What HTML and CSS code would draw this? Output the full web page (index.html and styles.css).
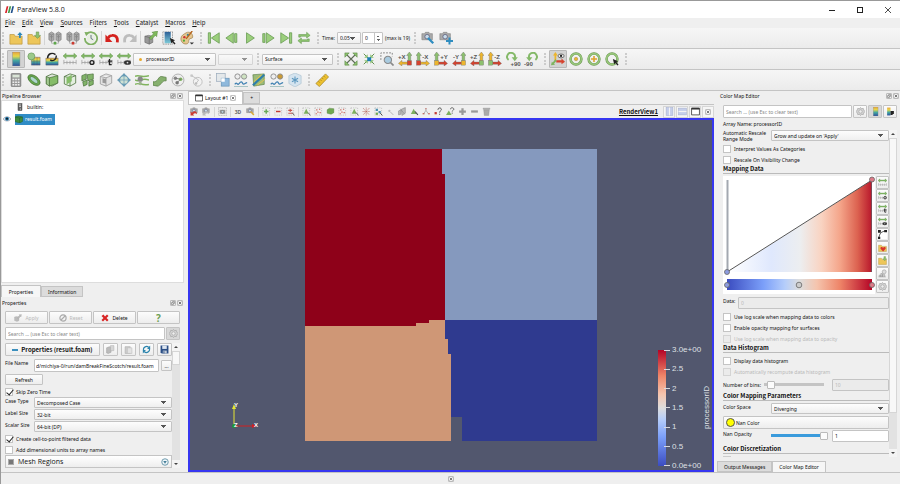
FILE: index.html
```html
<!DOCTYPE html>
<html lang="en">
<head>
    <meta charset="UTF-8">
    <meta name="viewport" content="width=device-width, initial-scale=1.0">
    <title>ParaView 5.8.0</title>
    <link rel="stylesheet" href="styles.css">
</head>
<body>
<!-- icon set -->
<svg class="sprite" aria-hidden="true">
    <defs>
        <linearGradient id="rainbow" x1="0" y1="0" x2="0" y2="1">
            <stop offset="0" stop-color="#e8a33c"/><stop offset=".3" stop-color="#e6d84a"/>
            <stop offset=".6" stop-color="#45a9a0"/><stop offset="1" stop-color="#2c4f9e"/>
        </linearGradient>
        <linearGradient id="coolwarm">
            <stop offset="0" stop-color="#3b4cc0"/><stop offset=".25" stop-color="#7b9ff9"/>
            <stop offset=".4" stop-color="#b5cdfa"/><stop offset=".5" stop-color="#dddddd"/>
            <stop offset=".62" stop-color="#f5c4ad"/><stop offset=".78" stop-color="#ee8468"/>
            <stop offset="1" stop-color="#b40426"/>
        </linearGradient>
        <linearGradient id="legend" x1="0" y1="1" x2="0" y2="0">
            <stop offset="0" stop-color="#3b4cc0"/><stop offset=".25" stop-color="#7b9ff9"/>
            <stop offset=".4" stop-color="#b5cdfa"/><stop offset=".5" stop-color="#dddddd"/>
            <stop offset=".62" stop-color="#f5c4ad"/><stop offset=".78" stop-color="#ee8468"/>
            <stop offset="1" stop-color="#b40426"/>
        </linearGradient>
        <linearGradient id="opacity">
            <stop offset="0" stop-color="#ffffff"/><stop offset=".3" stop-color="#dfe8fd"/>
            <stop offset=".5" stop-color="#eceef0"/><stop offset=".65" stop-color="#f9d3c1"/>
            <stop offset=".78" stop-color="#f4a489"/><stop offset=".9" stop-color="#dc6250"/>
            <stop offset="1" stop-color="#b8162b"/>
        </linearGradient>
    </defs>
    <symbol id="logo" viewBox="0 0 16 12">
        <path d="M3 0h3L3 12H0z" fill="#d8232a"/><path d="M8 0h3L8 12H5z" fill="#3f9a48"/><path d="M13 0h3l-3 12h-3z" fill="#20508c"/>
    </symbol>
    <symbol id="folder" viewBox="0 0 16 16">
        <path d="M1 4h5l1 2h8v9H1z" fill="#edc65a" stroke="#b58f35" stroke-width=".7"/>
    </symbol>
    <symbol id="open" viewBox="0 0 16 16">
        <use href="#folder"/><path d="M12.500 1l3 3.500h-2V8h-2V4.500h-2z" fill="#2a86b8"/>
    </symbol>
    <symbol id="load" viewBox="0 0 16 16">
        <use href="#folder"/><path d="M12 8.500l3.500-3.500h-2V1h-3v4h-2z" fill="#8fc06c" stroke="#5a8a42" stroke-width=".5"/>
    </symbol>
    <symbol id="server" viewBox="0 0 16 16">
        <path d="M1 3l3-2 3 2v7l-3 2-3-2zM9 3l3-2 3 2v7l-3 2-3-2z" fill="#a9a9a9" stroke="#777" stroke-width=".7"/>
        <path d="M1 3l3 1.500L7 3M4 4.500V12M9 3l3 1.500L15 3M12 4.500V12M2 6l2 1 2-1M10 6l2 1 2-1" fill="none" stroke="#777" stroke-width=".6"/>
        <path d="M4 12v2h8v-2M8 10v4" fill="none" stroke="#999" stroke-width=".7"/>
        <rect x="6.500" y="12.500" width="3" height="3" fill="var(--mark)"/>
    </symbol>
    <symbol id="clock" viewBox="0 0 16 16">
        <path d="M3 3.500A7 7 0 1 1 1 8" fill="none" stroke="#7fb062" stroke-width="2"/>
        <path d="M.500 1l5 .500L2.500 6z" fill="#7fb062"/><circle cx="8" cy="8" r="4.700" fill="#e8efe2"/>
        <path d="M8 4.500V8.500L10.500 10" fill="none" stroke="#567" stroke-width="1"/>
    </symbol>
    <symbol id="undo" viewBox="0 0 16 16">
        <path d="M14 13c1-6-2-8.500-6-8C6 5.200 4.500 6 3.500 8" fill="none" stroke="currentColor" stroke-width="3.200"/>
        <path d="M.500 4V12.500h8z" fill="currentColor"/>
    </symbol>
    <symbol id="redo" viewBox="0 0 16 16">
        <path d="M2 13c-1-6 2-8.500 6-8 2 .200 3.500 1 4.500 3" fill="none" stroke="currentColor" stroke-width="3.200"/>
        <path d="M15.500 4V12.500h-8z" fill="currentColor"/>
    </symbol>
    <symbol id="box" viewBox="0 0 16 16">
        <path d="M8 1l6.500 2v8.500L8 15 1.500 12.500V4z" fill="#8fb87c" stroke="#49703a" stroke-width=".9"/>
        <path d="M1.500 4L8 5.500 14.500 3M8 5.500V15" fill="none" stroke="#49703a" stroke-width=".9"/>
    </symbol>
    <symbol id="box-on" viewBox="0 0 16 16">
        <path d="M0 4l6-2 9 2v9l-6 3-9-3z" fill="#3f8a3c" stroke="#25602a"/><path d="M0 4l9 2 6-2M9 6v10" fill="none" stroke="#25602a"/>
    </symbol>
    <symbol id="extract" viewBox="0 0 16 16">
        <path d="M1 6l4-1 5 1v7l-4 2-5-2z" fill="#999" stroke="#666" stroke-width=".7"/>
        <path d="M1 6l5 1.500L10 6M6 7.500V15" stroke="#666" fill="none" stroke-width=".7"/>
        <path d="M6 8l5-5-2-1.500L15.500 0l-1 6.500L13 5l-5 5z" fill="#7fb95c" stroke="#4d7f37" stroke-width=".5"/>
    </symbol>
    <symbol id="ramp" viewBox="0 0 16 16">
        <rect x="4" y="0" width="8.500" height="16" fill="url(#rainbow)" stroke="#888" stroke-width=".5"/>
    </symbol>
    <symbol id="cursor" viewBox="0 0 16 16">
        <path d="M9 8l6 2.500-2 1 2.500 3-1.500 1-2-3-1.500 1.500z" fill="#222"/>
    </symbol>
    <symbol id="ramp-pick" viewBox="0 0 16 16">
        <linearGradient id="blues" x1="0" y1="0" x2="0" y2="1"><stop offset="0" stop-color="#2c5f96"/><stop offset="1" stop-color="#7fcbd8"/></linearGradient>
        <rect x="3" y="1" width="7" height="13" fill="url(#blues)"/>
        <rect x="1" y="0" width="11" height="15" fill="none" stroke="#555" stroke-width=".8" stroke-dasharray="1 1"/><use href="#cursor"/>
    </symbol>
    <symbol id="palette" viewBox="0 0 16 16">
        <path d="M7 2c4-2 8 1 7.500 5-.400 2-3 1-4 2.500s0 4-2 5C5 16 1 13 1 9s3-5 6-7z" fill="#e5c58f" stroke="#94733f" stroke-width=".7"/>
        <circle cx="5" cy="7" r="1.400" fill="#c33"/><circle cx="9" cy="4.500" r="1.300" fill="#38a"/><circle cx="4.500" cy="11" r="1.300" fill="#5a3"/>
        <path d="M14 0L7 9" stroke="#b5651d" stroke-width="1.600"/><path d="M11 13h5l-2.500 2.500z" fill="#333"/>
    </symbol>
    <symbol id="first" viewBox="0 0 16 16"><path d="M1.500 2h2.500v12H1.500zM14 2v12L5 8z" fill="#9bce7c" stroke="#5d9348" stroke-width=".8"/></symbol>
    <symbol id="back" viewBox="0 0 16 16"><path d="M9.500 2v12L1 8zM11 3h2.500v10H11z" fill="#9bce7c" stroke="#5d9348" stroke-width=".8"/></symbol>
    <symbol id="play" viewBox="0 0 16 16"><path d="M4 2l9 6-9 6z" fill="#9bce7c" stroke="#5d9348" stroke-width=".8"/></symbol>
    <symbol id="next" viewBox="0 0 16 16"><path d="M2 3h2.500v10H2zM6 2l9 6-9 6z" fill="#9bce7c" stroke="#5d9348" stroke-width=".8"/></symbol>
    <symbol id="last" viewBox="0 0 16 16"><path d="M2 2l9 6-9 6zM12 2h2.500v12H12z" fill="#9bce7c" stroke="#5d9348" stroke-width=".8"/></symbol>
    <symbol id="loop" viewBox="0 0 16 16">
        <path d="M2 7V4h9V1.500L15 5l-4 3V6H4v1zM14 9v3H5v2.500L1 11l4-3v2h7V9z" fill="#8fc571" stroke="#5d9348" stroke-width=".6"/>
    </symbol>
    <symbol id="camera" viewBox="0 0 16 16">
        <path d="M1 3h3l1-1.500h4L10 3h3v7H1z" fill="#aaa" stroke="#777" stroke-width=".6"/><circle cx="7" cy="6.500" r="2.600" fill="#c8dcea" stroke="#557" stroke-width=".8"/>
    </symbol>
    <symbol id="camera-link" viewBox="0 0 16 16"><use href="#camera"/><path d="M8 8l6 6" stroke="#2f8dc0" stroke-width="2.600"/></symbol>
    <symbol id="camera-add" viewBox="0 0 16 16"><use href="#camera"/><path d="M12 7.500v8M8 11.500h8" stroke="#2f8dc0" stroke-width="2.300"/></symbol>
    <symbol id="field" viewBox="0 0 16 16">
        <path d="M5 6h10v9H5z" fill="url(#rainbow)" stroke="#666" stroke-width=".5"/><path d="M8 6v9M11.500 6v9M5 10.500h10" stroke="#555" stroke-width=".4"/>
    </symbol>
    <symbol id="color-edit" viewBox="0 0 16 16"><use href="#field"/><circle cx="5" cy="5" r="4" fill="#9cc98a" stroke="#5e9150" stroke-width=".7"/></symbol>
    <symbol id="color-sep" viewBox="0 0 16 16"><path d="M1 7h14v8H1z" fill="url(#rainbow)" stroke="#666" stroke-width=".5"/><path d="M3 7c0-5 5-7 9-4M6 9c3 2 7 0 7-5" fill="none" stroke="#222" stroke-width="1.600"/></symbol>
    <symbol id="range" viewBox="0 0 16 16">
        <path d="M0 4.500L3.500 1.500v2h9v-2L16 4.500l-3.500 3v-2h-9v2z" fill="#84b968" stroke="#5d9348" stroke-width=".5"/>
        <path d="M1 9v5M4.500 10v4M8 10v4M11.500 10v4M15 9v5M1 12h14" stroke="#999" stroke-width=".8"/>
    </symbol>
    <symbol id="range-c" viewBox="0 0 16 16"><use href="#range"/><circle cx="12.500" cy="12" r="2.200" fill="#ddd" stroke="#222" stroke-width="1.500"/></symbol>
    <symbol id="range-t" viewBox="0 0 16 16"><use href="#range"/><path d="M12 8v6.500h2.500M10 10.500h5" fill="none" stroke="#222" stroke-width="1.500"/></symbol>
    <symbol id="range-v" viewBox="0 0 16 16"><use href="#range"/><ellipse cx="12" cy="12" rx="4" ry="2.600" fill="#333"/><circle cx="12" cy="12" r="1" fill="#ddd"/></symbol>
    <symbol id="reset-cam" viewBox="0 0 16 16">
        <path d="M2 2l12 12M14 2L2 14" stroke="#5f6b58" stroke-width="1.300"/>
        <path d="M1 1h5L1 6zM15 1v5l-5-5zM1 15v-5l5 5zM15 15h-5l5-5z" fill="#8cc06e" stroke="#55833f" stroke-width=".6"/>
    </symbol>
    <symbol id="zoom-data" viewBox="0 0 16 16">
        <path d="M2 2l12 12M14 2L2 14" stroke="#55833f" stroke-width="1"/>
        <path d="M6.500 6.500V2.500l-4 4zM9.500 6.500V2.500l4 4zM6.500 9.500V13.500l-4-4zM9.500 9.500V13.500l4-4z" fill="#8cc06e"/><rect x="6" y="6" width="4.500" height="4.500" fill="#1d7eb5"/>
    </symbol>
    <symbol id="zoom-box" viewBox="0 0 16 16">
        <path d="M1 9V1h13v4" fill="none" stroke="#777" stroke-dasharray="2 1.500"/><circle cx="9" cy="9" r="4.200" fill="#a9cbe0" stroke="#8a8a8a" stroke-width="1.200"/><path d="M12 12l3.500 3.500" stroke="#8a8a8a" stroke-width="2"/>
    </symbol>
    <symbol id="cam-left" viewBox="0 0 16 16">
        <path d="M11.500 10V4h-1.700L13 0l3 4h-1.500v6z" fill="var(--up)" stroke="#666" stroke-width=".4"/>
        <path d="M11 11.500H4.500v-2L.500 13l4 3v-2H11z" fill="var(--side)" stroke="#666" stroke-width=".4"/>
        <rect x="10.500" y="10" width="5" height="5" fill="var(--corner)" stroke="#666" stroke-width=".4"/>
    </symbol>
    <symbol id="cam-right" viewBox="0 0 16 16">
        <path d="M1.500 10V4H0l3-4 3.200 4H4.500v6z" fill="var(--up)" stroke="#666" stroke-width=".4"/>
        <path d="M5 11.500h6.500v-2l4 3.500-4 3v-2H5z" fill="var(--side)" stroke="#666" stroke-width=".4"/>
        <rect x=".500" y="10" width="5" height="5" fill="var(--corner)" stroke="#666" stroke-width=".4"/>
    </symbol>
    <symbol id="rot-cw" viewBox="0 0 16 16">
        <path d="M3 9A4.500 4.500 0 1 1 10 7" fill="none" stroke="#84b968" stroke-width="2.200"/><path d="M6.500 6h7l-3.500 4.500z" fill="#84b968"/>
    </symbol>
    <symbol id="rot-ccw" viewBox="0 0 16 16">
        <path d="M13 9A4.500 4.500 0 1 0 6 7" fill="none" stroke="#84b968" stroke-width="2.200"/><path d="M9.500 6h-7L6 10.500z" fill="#84b968"/>
    </symbol>
    <symbol id="axes" viewBox="0 0 16 16">
        <path d="M4 10V4H2.300L5 0l2.700 4H6v6z" fill="#edb52d"/><path d="M6 9.500h6v-2l4 3.500-4 3v-2H6z" fill="#d6432f"/><path d="M5 8l1.500 2-3 3 1 1.500L0 15l1-4 1 1z" fill="#7fb45f"/>
        <ellipse cx="11.500" cy="4.500" rx="3.500" ry="2.200" fill="#eee" stroke="#444" stroke-width=".8"/><circle cx="11.500" cy="4.500" r="1.300" fill="#222"/>
    </symbol>
    <symbol id="center" viewBox="0 0 16 16">
        <circle cx="8" cy="8" r="6.200" fill="none" stroke="#6b9453" stroke-width="2.800"/><circle cx="8" cy="8" r="6.200" fill="none" stroke="#97c67a" stroke-width="1.900"/>
    </symbol>
    <symbol id="center-dot" viewBox="0 0 16 16"><use href="#center"/><circle cx="8" cy="8" r="2" fill="#edb52d" stroke="#97783c" stroke-width=".5"/></symbol>
    <symbol id="center-cross" viewBox="0 0 16 16"><use href="#center"/><path d="M8 4.500v7M4.500 8h7" stroke="#dda32c" stroke-width="1.800"/></symbol>
    <symbol id="center-pick" viewBox="0 0 16 16"><use href="#center"/><use href="#cursor"/></symbol>

    <symbol id="calc" viewBox="0 0 16 16">
        <rect x="2.500" y=".500" width="11" height="15" rx="1" fill="#999" stroke="#666" stroke-width=".7"/><rect x="4" y="2" width="8" height="3" fill="#d9e4d6"/>
        <path d="M4 7.500h8M4 10.500h8M4 13.500h8" stroke="#eee" stroke-width="1.800" stroke-dasharray="2 1"/>
    </symbol>
    <symbol id="contour" viewBox="0 0 16 16">
        <ellipse cx="8" cy="8" rx="8" ry="4.600" transform="rotate(38 8 8)" fill="#6aa84d" stroke="#3e6b2c" stroke-width=".8"/>
        <ellipse cx="8" cy="8" rx="5.500" ry="2.300" transform="rotate(38 8 8)" fill="#b0d6d0" stroke="#47823a" stroke-width=".8"/>
    </symbol>
    <symbol id="clip" viewBox="0 0 16 16">
        <path d="M1.500 4L8 1l6.500 2v8.500L8 15l-6.500-2.500z" fill="#dfe6db" stroke="#49703a" stroke-width=".9"/>
        <path d="M5 5.500L14.500 3v8.500L5 15z" fill="#86bd69" stroke="#49703a" stroke-width=".8"/><path d="M1.500 4L5 5.500V15l-3.500-2.500z" fill="#a3c990" stroke="#49703a" stroke-width=".8"/>
    </symbol>
    <symbol id="slice" viewBox="0 0 16 16">
        <path d="M1.500 4L8 1l6.500 2v8.500L8 15l-6.500-2.500zM1.500 4L8 5.500 14.500 3M8 5.500V15" fill="#e4eee0" stroke="#49703a" stroke-width=".9"/><path d="M4 5l6-3v7.500L4 13z" fill="#86bd69"/>
    </symbol>
    <symbol id="threshold" viewBox="0 0 16 16">
        <path d="M1 3l5-2v6L1 9zM7 2l7-1v6L8 9zM2 10l5-2v5l-4 2zM9 10l5-2v5l-5 2z" fill="#82b46a" stroke="#49703a" stroke-width=".8"/>
    </symbol>
    <symbol id="subset" viewBox="0 0 16 16">
        <path d="M1.500 4L8 1l6.500 2v8.500L8 15l-6.500-2.500zM1.500 4L8 5.500 14.500 3M8 5.500V15" fill="#e2e2e2" stroke="#999" stroke-width=".9"/><path d="M4 6l4 1v5l-4-1z" fill="#999"/>
    </symbol>
    <symbol id="glyph" viewBox="0 0 16 16">
        <path d="M8 0l3 3.500H5zM8 16l3-3.500H5zM0 8l3.500-3v6zM16 8l-3.500-3v6z" fill="#679bb5"/><circle cx="8" cy="8" r="5" fill="#cde0d4" stroke="#679bb5" stroke-width="1.200"/><path d="M3 8h10M8 3v10" stroke="#679bb5" stroke-width=".8"/>
    </symbol>
    <symbol id="stream" viewBox="0 0 16 16">
        <path d="M0 4c4-3 6 2 16-1M0 8c5 3 7-3 16 0M0 13c5-3 7 2 16 0" fill="none" stroke="#80b45e" stroke-width="1.700"/><circle cx="6" cy="7" r="3" fill="#888"/><circle cx="6" cy="12" r="2" fill="#9ab589"/>
    </symbol>
    <symbol id="warp" viewBox="0 0 16 16"><path d="M0 10c6 1 6-7 10-6l5 1v4c-5-1-6 6-10 6l-5-1z" fill="#86b06e" stroke="#557a40" stroke-width=".8"/></symbol>
    <symbol id="group" viewBox="0 0 16 16">
        <circle cx="8" cy="8" r="6.800" fill="#eee" stroke="#aaa"/><circle cx="5" cy="6" r="2" fill="#888"/><circle cx="11" cy="7" r="2" fill="#7db05e"/><circle cx="7" cy="11" r="2" fill="#777"/><path d="M5 6l6 1-4 4" fill="none" stroke="#777"/>
    </symbol>
    <symbol id="level" viewBox="0 0 16 16">
        <circle cx="10" cy="10" r="5" fill="#f2f2f2" stroke="#bbb"/><circle cx="3" cy="3" r="1.700" fill="#ccc"/><path d="M3 3l8 5-3 4" stroke="#bbb" fill="none"/><circle cx="8" cy="12" r="1.500" fill="#bbb"/>
    </symbol>
    <symbol id="select-block" viewBox="0 0 16 16">
        <rect x=".500" y=".500" width="10" height="9" fill="#e4e8ea" stroke="#9ab" stroke-width=".8"/><rect x="6" y="6" width="9" height="9" fill="#8fb9dc" stroke="#6893b6" stroke-width=".8"/><rect x="6" y="6" width="4" height="4" fill="#fff"/>
    </symbol>
    <symbol id="plot" viewBox="0 0 16 16">
        <circle cx="4" cy="4" r="3" fill="#eee" stroke="#888"/><circle cx="11.500" cy="4" r="3" fill="var(--mark)" stroke="#888"/>
        <path d="M1 13c2-4 3 2 5-1s3-2 4 0 3-1 5-1" fill="none" stroke="#3d7fb1" stroke-width="1.500"/><path d="M0 15.500h16" stroke="#9bb"/>
    </symbol>
    <symbol id="plot-line" viewBox="0 0 16 16">
        <path d="M1 2l13-1v12L2 15z" fill="#9dbc79" stroke="#557a40" stroke-width=".7"/><path d="M1 14L14 2" stroke="#2e7fab" stroke-width="2.500"/><path d="M2 10l9-8M6 14l9-7" stroke="#eec24a" stroke-width="1"/>
    </symbol>
    <symbol id="freeze" viewBox="0 0 16 16">
        <path d="M8 0l7 3v9l-7 4-7-4V3z" fill="#d5e4ef" stroke="#a8bfcd" stroke-width=".7"/><path d="M8 4v8M4.500 6l7 4M11.500 6l-7 4" stroke="#5f9ac0" stroke-width="1.300"/>
    </symbol>
    <symbol id="ruler" viewBox="0 0 16 16">
        <path d="M12 1l3.500 3.500L5 15.500 1 12z" fill="#edc12f" stroke="#a38324" stroke-width=".8"/><path d="M10 3.500l1.500 1.500M8 5.500l1.500 1.500M6 7.500L7.500 9M4 9.500L5.500 11" stroke="#8a6d18" stroke-width=".7"/>
    </symbol>
    <symbol id="close" viewBox="0 0 16 16">
        <rect x="1" y="1" width="14" height="14" rx="3" fill="none" stroke="#888" stroke-width="1.600"/><path d="M4.500 4.500l7 7M11.500 4.500l-7 7" stroke="#555" stroke-width="2"/>
    </symbol>
    <symbol id="float" viewBox="0 0 16 16">
        <rect x="1" y="1" width="14" height="14" rx="3" fill="none" stroke="#888" stroke-width="1.600"/><path d="M4 7h5v5H4zM7 7V4h5v5H9" fill="none" stroke="#666" stroke-width="1.400"/>
    </symbol>
    <symbol id="eye" viewBox="0 0 16 16">
        <path d="M0 8c4-6 12-6 16 0-4 5.500-12 5.500-16 0z" fill="#d9e4ec" stroke="#667" stroke-width=".8"/><circle cx="8" cy="7.500" r="4" fill="#2879a8"/><circle cx="8" cy="7.500" r="2.200" fill="#0c1c28"/>
    </symbol>
    <symbol id="host" viewBox="0 0 16 16">
        <rect x="4" y="1" width="8" height="14" fill="#666" stroke="#333" stroke-width=".8"/><path d="M6 4h4M6 7h4" stroke="#eee" stroke-width="1.400"/><circle cx="9" cy="12" r="1.200" fill="#ddd"/>
    </symbol>
    <symbol id="apply" viewBox="0 0 16 16">
        <path d="M1 6l4-1 5 1v7l-4 2-5-2zM6 8l5-5-1-1.500L15 1l-1 5-1-1-5 5z" fill="#bbb" stroke="#aaa" stroke-width=".6"/>
    </symbol>
    <symbol id="forbid" viewBox="0 0 16 16"><circle cx="8" cy="8" r="6.200" fill="none" stroke="#aaa" stroke-width="2.400"/><path d="M4 12l8-8" stroke="#aaa" stroke-width="2.200"/></symbol>
    <symbol id="delete" viewBox="0 0 16 16"><path d="M1 4l4-3 3 4 4-4 3 3-4 4 4 4-3 3-4-4-4 4-3-3 4-4z" fill="#d82323"/></symbol>
    <symbol id="gear" viewBox="0 0 16 16">
        <path d="M8 1l2 1.800 3-.300.700 2.700L16 8l-2.300 2.800-.700 2.700-3-.300L8 15l-2-1.800-3 .300-.700-2.700L0 8l2.300-2.800L3 2.500l3 .300z" fill="#d2d2d2" stroke="#999" stroke-width="1"/><circle cx="8" cy="8" r="3" fill="#eee" stroke="#999"/>
    </symbol>
    <symbol id="copy" viewBox="0 0 16 16"><path d="M1 5l5-2 3 1v9l-5 2-3-1z" fill="#bbb" stroke="#999" stroke-width=".8"/><path d="M8 1h6v9H8z" fill="#d6d6d6" stroke="#aaa" stroke-width=".8"/></symbol>
    <symbol id="paste" viewBox="0 0 16 16"><path d="M2 3h9v12H2z" fill="#ccc" stroke="#aaa"/><path d="M6 5h8v10H6z" fill="#e3e3e3" stroke="#bbb"/></symbol>
    <symbol id="reload" viewBox="0 0 16 16">
        <path d="M2.500 9A5.500 5.500 0 0 1 12 4.500M13.500 7A5.500 5.500 0 0 1 4 11.500" fill="none" stroke="#2b84ad" stroke-width="2.200"/><path d="M14.500 1v6H9zM1.500 15V9H7z" fill="#2b84ad"/>
    </symbol>
    <symbol id="save" viewBox="0 0 16 16">
        <path d="M1 1h14v14H3l-2-2z" fill="#2c4f86"/><rect x="4" y="1" width="8" height="6" fill="#dde6f0"/><rect x="5" y="10" width="7" height="5" fill="#c2ccd8"/><path d="M7 11v4" stroke="#2c4f86" stroke-width="1.600"/>
    </symbol>
    <symbol id="window" viewBox="0 0 16 16"><path d="M1 2h14v12H1z" fill="#fff" stroke="#333" stroke-width="1.400"/><path d="M1 3h14" stroke="#333" stroke-width="3"/></symbol>
    <symbol id="split-h" viewBox="0 0 16 16"><rect x="2" y="1" width="12" height="14" fill="#c6cfea" stroke="#a6b0cf"/><path d="M8 1v14" stroke="#f4f4f4" stroke-width="2"/></symbol>
    <symbol id="split-v" viewBox="0 0 16 16"><rect x="1" y="2" width="14" height="12" fill="#c6cfea" stroke="#a6b0cf"/><path d="M1 8h14" stroke="#f4f4f4" stroke-width="2"/></symbol>
    <symbol id="cam-undo" viewBox="0 0 16 16"><use href="#camera"/><path d="M1 15V8l2.500 2c4-4 9-3 9 3-3-3-5-2-7 0l2 2z" fill="var(--mark)"/></symbol>
    <symbol id="cam-shot" viewBox="0 0 16 16"><rect x="1" y="1" width="14" height="14" fill="none" stroke="#999" stroke-dasharray="2 1"/><path d="M3 5h10v7H3z" fill="#999"/><circle cx="8" cy="8.500" r="2.500" fill="#bcd3df" stroke="#666"/></symbol>
    <symbol id="cam-adjust" viewBox="0 0 16 16"><use href="#camera"/><path d="M8 8l6 6" stroke="#dba936" stroke-width="2.600"/></symbol>
    <symbol id="pick" viewBox="0 0 16 16"><rect x="1.500" y="1.500" width="12" height="13" fill="none" stroke="#aaa" stroke-dasharray="2 2"/></symbol>
    <symbol id="pick-add" viewBox="0 0 16 16"><use href="#pick"/><path d="M7.500 4v8M3.500 8h8" stroke="#6aa858" stroke-width="2.600"/></symbol>
    <symbol id="pick-sub" viewBox="0 0 16 16"><use href="#pick"/><path d="M3.500 8h8" stroke="#c23b33" stroke-width="2.600"/></symbol>
    <symbol id="pick-tog" viewBox="0 0 16 16"><use href="#pick"/><path d="M4 11h8M4 6h7M7.500 3v6" stroke="#c2554d" stroke-width="1.800"/><path d="M11 10l4 5" stroke="#555" stroke-width="1.500"/></symbol>
    <symbol id="pick-cell" viewBox="0 0 16 16"><use href="#pick"/><path d="M7.500 3l4.500 9H3z" fill="#7db05e"/><path d="M11 10l4 5" stroke="#555" stroke-width="1.500"/></symbol>
    <symbol id="pick-pts" viewBox="0 0 16 16"><use href="#pick"/><path d="M4 4h2v2H4zM9 3h2v2H9zM6 8h2v2H6zM3 11h2v2H3zM10 9h2v2h-2z" fill="#c5574b"/></symbol>
    <symbol id="pick-block" viewBox="0 0 16 16"><path d="M2 5l4-3 8 1v7l-5 3-7-2z" fill="#6fa851" stroke="#476f33" stroke-width=".6"/></symbol>
    <symbol id="pick-all" viewBox="0 0 16 16"><path d="M2 2l11 12M13 2L2 14M1 8h13M7.500 1v14" stroke="#b76a5f" stroke-width="1.300" stroke-dasharray="2 1"/></symbol>
    <symbol id="pick-blue" viewBox="0 0 16 16"><use href="#pick"/><path d="M3 3h4v4H3zM8 7h4v4H8z" fill="#4a8fae"/><path d="M3 10h4v4H3z" fill="#6fa851"/><path d="M11 11l4 4" stroke="#333" stroke-width="1.500"/></symbol>
    <symbol id="pick-dim" viewBox="0 0 16 16"><circle cx="6" cy="7" r="2" fill="#bbb"/><path d="M8 9l5 5" stroke="#aaa" stroke-width="1.500"/></symbol>
    <symbol id="pick-gray" viewBox="0 0 16 16"><path d="M1 7l4-2v8l-4 1zM6 4l7-3v10l-6 4z" fill="#bbb" stroke="#888"/><path d="M4 3l8 10" stroke="#888"/></symbol>
    <symbol id="hover" viewBox="0 0 16 16"><path d="M6.500 3l5 9.500h-10z" fill="#7db05e"/><path d="M9 8l5 6" stroke="#444" stroke-width="1.800"/></symbol>
    <symbol id="hover-pts" viewBox="0 0 16 16"><path d="M7 2v4M2 12h3M7 6l5 7M7 6L3 12" stroke="#888" stroke-width="1"/><path d="M6 2h2v2H6zM1 11h3v2H1zM11 11h3v2h-3z" fill="#c5574b"/></symbol>
    <symbol id="ask-pt" viewBox="0 0 16 16"><rect x="1" y="9" width="4" height="4" fill="#c23b33"/><path d="M7 5c0-5 7-4 6 0-.500 2-3 2-3 5M10 12v2" fill="none" stroke="#555" stroke-width="1.700"/></symbol>
    <symbol id="ask-cell" viewBox="0 0 16 16"><path d="M5 6l5 8H0z" fill="#7db05e"/><path d="M8 4c0-4 6-3 6 0-.500 2-3 2-3 4M11 10v2" fill="none" stroke="#555" stroke-width="1.600"/></symbol>
    <symbol id="plus" viewBox="0 0 16 16"><path d="M8 2v12M2 8h12" stroke="#999" stroke-width="4"/></symbol>
    <symbol id="minus" viewBox="0 0 16 16"><path d="M2 8h12" stroke="#999" stroke-width="4"/></symbol>
    <symbol id="trash" viewBox="0 0 16 16"><path d="M3 5h10l-1 10H4zM2 2h12v2H2z" fill="#aaa" stroke="#888" stroke-width=".6"/></symbol>
    <symbol id="ramp-corner" viewBox="0 0 16 16"><rect x="2" y="1" width="6" height="14" fill="url(#rainbow)"/><path d="M8 7h6v4l-3 3H8z" fill="#222"/></symbol>
    <symbol id="curve" viewBox="0 0 16 16"><rect width="16" height="16" fill="#fff"/><path d="M2 15C2 6 6 2 15 2" fill="none" stroke="#222" stroke-width="1.300"/><path d="M0 0h5v5H0zM11 0h5v4h-5zM0 12h4v4H0z" fill="#222"/></symbol>
    <symbol id="fav" viewBox="0 0 16 16"><use href="#folder"/><path d="M9 15L4.500 10c-1-3 3-4 4.500-1.500C10.500 6 14.500 7 13.500 10z" fill="#d8342c"/></symbol>
    <symbol id="histo" viewBox="0 0 16 16"><path d="M1 14h13M2 14v-3h3v3M5 14V8h3v6M8 14v-4h4v4" fill="#ccc" stroke="#999"/><circle cx="11" cy="5" r="3.500" fill="#ddd" stroke="#999"/></symbol>
    <symbol id="expand" viewBox="0 0 16 16"><circle cx="8" cy="8" r="6.500" fill="#eef5f8" stroke="#467f98" stroke-width="1.500"/><path d="M4.500 6h7L8 11.500z" fill="#467f98"/></symbol>
</svg>

<header class="titlebar">
    <svg class="logo"><use href="#logo"/></svg>
    <h1>ParaView 5.8.0</h1>
    <div class="window-controls">
        <button aria-label="Minimize"><svg viewBox="0 0 8 8"><path d="M1 4.500h6" stroke="#222"/></svg></button>
        <button aria-label="Maximize"><svg viewBox="0 0 8 8"><rect x="1.500" y="1.500" width="5" height="5" fill="none" stroke="#222"/></svg></button>
        <button aria-label="Close"><svg viewBox="0 0 8 8"><path d="M1 1l6 6M7 1L1 7" stroke="#222" stroke-width=".8"/></svg></button>
    </div>
</header>

<nav class="menubar">
    <button><u>F</u>ile</button>
    <button><u>E</u>dit</button>
    <button><u>V</u>iew</button>
    <button><u>S</u>ources</button>
    <button>Fi<u>l</u>ters</button>
    <button><u>T</u>ools</button>
    <button><u>C</u>atalyst</button>
    <button><u>M</u>acros</button>
    <button><u>H</u>elp</button>
</nav>

<div class="toolbar">
    <i class="handle"></i>
    <button class="tool" aria-label="Open"><svg><use href="#open"/></svg></button>
    <button class="tool" aria-label="Load state"><svg><use href="#load"/></svg></button>
    <i class="sep"></i>
    <button class="tool mark-green" aria-label="Connect"><svg><use href="#server"/></svg></button>
    <button class="tool mark-red" aria-label="Disconnect"><svg><use href="#server"/></svg></button>
    <button class="tool" aria-label="Reload"><svg><use href="#clock"/></svg></button>
    <i class="sep"></i>
    <button class="tool red" aria-label="Undo"><svg><use href="#undo"/></svg></button>
    <button class="tool gray" aria-label="Redo"><svg><use href="#redo"/></svg></button>
    <i class="sep"></i>
    <button class="tool" aria-label="Extract"><svg><use href="#extract"/></svg></button>
    <button class="tool" aria-label="Select colors"><svg><use href="#ramp-pick"/></svg></button>
    <button class="tool" aria-label="Palette"><svg><use href="#palette"/></svg></button>
    <i class="handle wide"></i>
    <button class="tool" aria-label="First frame"><svg><use href="#first"/></svg></button>
    <button class="tool" aria-label="Previous frame"><svg><use href="#back"/></svg></button>
    <button class="tool" aria-label="Play"><svg><use href="#play"/></svg></button>
    <button class="tool" aria-label="Next frame"><svg><use href="#next"/></svg></button>
    <button class="tool" aria-label="Last frame"><svg><use href="#last"/></svg></button>
    <button class="tool" aria-label="Loop"><svg><use href="#loop"/></svg></button>
    <i class="handle wide"></i>
    <label for="time">Time:</label>
    <select id="time" class="time"><option>0.05</option></select>
    <input id="step" class="step" type="number" value="0" aria-label="Time step">
    <span class="note">(max is 19)</span>
    <i class="handle wide"></i>
    <button class="tool" aria-label="Adjust camera"><svg><use href="#camera-link"/></svg></button>
    <button class="tool" aria-label="Add camera"><svg><use href="#camera-add"/></svg></button>
</div>

<div class="toolbar">
    <i class="handle"></i>
    <button class="tool pressed" aria-label="Color legend"><svg><use href="#ramp"/></svg></button>
    <button class="tool" aria-label="Edit color map"><svg><use href="#color-edit"/></svg></button>
    <button class="tool" aria-label="Separate color map"><svg><use href="#color-sep"/></svg></button>
    <button class="tool" aria-label="Rescale to data"><svg><use href="#range"/></svg></button>
    <button class="tool" aria-label="Rescale to custom"><svg><use href="#range-c"/></svg></button>
    <button class="tool" aria-label="Rescale over time"><svg><use href="#range-t"/></svg></button>
    <button class="tool" aria-label="Rescale to visible"><svg><use href="#range-v"/></svg></button>
    <div class="array-pick">
        <select class="array" aria-label="Color array"><option>processorID</option></select>
    </div>
    <select class="component" aria-label="Component" disabled><option></option></select>
    <i class="handle wide"></i>
    <select class="repr" aria-label="Representation"><option>Surface</option></select>
    <i class="handle wide"></i>
    <button class="tool" aria-label="Reset camera"><svg><use href="#reset-cam"/></svg></button>
    <button class="tool" aria-label="Zoom to data"><svg><use href="#zoom-data"/></svg></button>
    <button class="tool" aria-label="Zoom to box"><svg><use href="#zoom-box"/></svg></button>
    <button class="tool view-x"><svg viewBox="0 0 16 16"><use href="#cam-left"/><text x="0" y="8">+X</text></svg></button>
    <button class="tool view-x"><svg viewBox="0 0 16 16"><use href="#cam-right"/><text x="7" y="8">-X</text></svg></button>
    <button class="tool view-y"><svg viewBox="0 0 16 16"><use href="#cam-right"/><text x="7" y="8">+Y</text></svg></button>
    <button class="tool view-y"><svg viewBox="0 0 16 16"><use href="#cam-left"/><text x="1" y="8">-Y</text></svg></button>
    <button class="tool view-z"><svg viewBox="0 0 16 16"><use href="#cam-left"/><text x="0" y="8">+Z</text></svg></button>
    <button class="tool view-z"><svg viewBox="0 0 16 16"><use href="#cam-right"/><text x="7" y="8">-Z</text></svg></button>
    <button class="tool"><svg viewBox="0 0 16 16"><use href="#rot-cw"/><text x="5" y="16">+90</text></svg></button>
    <button class="tool"><svg viewBox="0 0 16 16"><use href="#rot-ccw"/><text x="0" y="16">-90</text></svg></button>
    <i class="handle wide"></i>
    <button class="tool pressed" aria-label="Show axes"><svg><use href="#axes"/></svg></button>
    <button class="tool" aria-label="Show center"><svg><use href="#center-dot"/></svg></button>
    <button class="tool" aria-label="Reset center"><svg><use href="#center-cross"/></svg></button>
    <button class="tool" aria-label="Pick center"><svg><use href="#center-pick"/></svg></button>
    <i class="handle wide"></i>
</div>

<div class="toolbar">
    <i class="handle"></i>
    <button class="tool" aria-label="Calculator"><svg><use href="#calc"/></svg></button>
    <button class="tool" aria-label="Contour"><svg><use href="#contour"/></svg></button>
    <button class="tool" aria-label="Clip"><svg><use href="#clip"/></svg></button>
    <button class="tool" aria-label="Slice"><svg><use href="#slice"/></svg></button>
    <button class="tool" aria-label="Threshold"><svg><use href="#threshold"/></svg></button>
    <button class="tool" aria-label="Extract subset"><svg><use href="#subset"/></svg></button>
    <button class="tool" aria-label="Glyph"><svg><use href="#glyph"/></svg></button>
    <button class="tool" aria-label="Stream tracer"><svg><use href="#stream"/></svg></button>
    <button class="tool" aria-label="Warp"><svg><use href="#warp"/></svg></button>
    <button class="tool" aria-label="Group"><svg><use href="#group"/></svg></button>
    <button class="tool" aria-label="Extract level"><svg><use href="#level"/></svg></button>
    <i class="handle wide"></i>
    <button class="tool" aria-label="Extract selection"><svg><use href="#select-block"/></svg></button>
    <button class="tool mark-pale" aria-label="Plot over time"><svg><use href="#plot"/></svg></button>
    <button class="tool" aria-label="Plot over line"><svg><use href="#plot-line"/></svg></button>
    <button class="tool mark-gold" aria-label="Plot selection"><svg><use href="#plot"/></svg></button>
    <button class="tool" aria-label="Freeze"><svg><use href="#freeze"/></svg></button>
    <i class="handle wide"></i>
    <button class="tool" aria-label="Ruler"><svg><use href="#ruler"/></svg></button>
</div>

<main class="workspace">
    <aside class="dock left">
        <h2 class="dock-title">Pipeline Browser <svg><use href="#float"/></svg><svg><use href="#close"/></svg></h2>
        <ul class="pipeline">
            <li><svg class="eye"></svg><svg><use href="#host"/></svg><span>builtin:</span></li>
            <li><svg class="eye"><use href="#eye"/></svg><span class="selected"><svg><use href="#box-on"/></svg>result.foam</span></li>
        </ul>
        <div class="tabs">
            <button class="tab active">Properties</button>
            <button class="tab">Information</button>
        </div>
        <h2 class="dock-title">Properties <svg><use href="#float"/></svg><svg><use href="#close"/></svg></h2>
        <div class="properties">
            <div class="actions">
                <button class="btn" disabled><svg><use href="#apply"/></svg>Apply</button>
                <button class="btn" disabled><svg><use href="#forbid"/></svg>Reset</button>
                <button class="btn"><svg><use href="#delete"/></svg>Delete</button>
                <button class="btn help">?</button>
            </div>
            <div class="search-row">
                <input type="text" placeholder="Search ... (use Esc to clear text)" aria-label="Search properties">
                <button class="btn pressed" aria-label="Advanced"><svg><use href="#gear"/></svg></button>
            </div>
            <div class="scroll-area">
                <div class="fields">
                    <div class="section-row">
                        <button class="btn section"><i class="dash"></i>Properties (result.foam)</button>
                        <button class="btn" aria-label="Copy"><svg><use href="#copy"/></svg></button>
                        <button class="btn" aria-label="Paste"><svg><use href="#paste"/></svg></button>
                        <button class="btn" aria-label="Restore defaults"><svg><use href="#reload"/></svg></button>
                        <button class="btn" aria-label="Save defaults"><svg><use href="#save"/></svg></button>
                    </div>
                    <div class="field">
                        <label for="file">File Name</label>
                        <input id="file" class="path" type="text" value="d/michiya-0/run/damBreakFineScotch/result.foam">
                        <button class="btn browse" aria-label="Browse">...</button>
                    </div>
                    <button class="btn refresh">Refresh</button>
                    <label class="check"><input type="checkbox" checked>Skip Zero Time</label>
                    <div class="field"><label for="case">Case Type</label><select id="case"><option>Decomposed Case</option></select></div>
                    <div class="field"><label for="lab">Label Size</label><select id="lab"><option>32-bit</option></select></div>
                    <div class="field"><label for="scal">Scalar Size</label><select id="scal"><option>64-bit (DP)</option></select></div>
                    <label class="check"><input type="checkbox" checked>Create cell-to-point filtered data</label>
                    <label class="check"><input type="checkbox">Add dimensional units to array names</label>
                    <div class="mesh"><i class="partial"></i><span>Mesh Regions</span><svg><use href="#expand"/></svg></div>
                </div>
                <div class="scrollbar"><i class="up"></i><i class="thumb short"></i><i class="down"></i></div>
            </div>
        </div>
    </aside>

    <section class="layout">
        <div class="tabs view-tabs">
            <button class="tab active"><svg><use href="#window"/></svg>Layout #1<svg class="small"><use href="#close"/></svg></button>
            <button class="tab">+</button>
        </div>
        <div class="view-tools">
            <button class="mark-red" aria-label="Camera undo"><svg><use href="#cam-undo"/></svg></button>
            <button class="mark-gray" aria-label="Camera redo"><svg><use href="#cam-undo"/></svg></button>
            <i class="sep"></i>
            <button aria-label="Capture"><svg><use href="#cam-shot"/></svg></button>
            <i class="sep"></i>
            <button class="mode">3D</button>
            <button aria-label="Adjust camera"><svg><use href="#cam-adjust"/></svg></button>
            <i class="sep"></i>
            <button aria-label="Add selection"><svg><use href="#pick-add"/></svg></button>
            <button aria-label="Subtract selection"><svg><use href="#pick-sub"/></svg></button>
            <button aria-label="Toggle selection"><svg><use href="#pick-tog"/></svg></button>
            <i class="sep"></i>
            <button aria-label="Select cells"><svg><use href="#pick-cell"/></svg></button>
            <button aria-label="Select points"><svg><use href="#pick-pts"/></svg></button>
            <button aria-label="Select block"><svg><use href="#pick-block"/></svg></button>
            <button aria-label="Polygon points"><svg><use href="#pick-pts"/></svg></button>
            <button aria-label="Polygon cells"><svg><use href="#pick-cell"/></svg></button>
            <button aria-label="Frustum points"><svg><use href="#pick-all"/></svg></button>
            <button aria-label="Frustum cells"><svg><use href="#pick-blue"/></svg></button>
            <button aria-label="Interactive select"><svg><use href="#pick-dim"/></svg></button>
            <button aria-label="Blocks"><svg><use href="#pick-gray"/></svg></button>
            <button aria-label="Hover cells"><svg><use href="#hover"/></svg></button>
            <button aria-label="Hover points"><svg><use href="#hover-pts"/></svg></button>
            <button aria-label="Query point"><svg><use href="#ask-pt"/></svg></button>
            <button aria-label="Query cell"><svg><use href="#ask-cell"/></svg></button>
            <button aria-label="Grow"><svg><use href="#plus"/></svg></button>
            <button aria-label="Shrink"><svg><use href="#minus"/></svg></button>
            <button aria-label="Clear"><svg><use href="#trash"/></svg></button>
            <strong class="view-name">RenderView1</strong>
            <button class="frame" aria-label="Split horizontal"><svg><use href="#split-h"/></svg></button>
            <button class="frame" aria-label="Split vertical"><svg><use href="#split-v"/></svg></button>
            <button class="frame" aria-label="Maximize view"><svg><use href="#window"/></svg></button>
            <button class="frame" aria-label="Close view"><svg class="small"><use href="#close"/></svg></button>
        </div>
        <div class="render">
            <svg viewBox="190 120 522 350" role="img" aria-label="processorID">
                <path d="M305 149h137v25h3v146h-16v3h-13v3H305z" fill="#8e0119"/>
                <path d="M442 149h155v171H445V174h-3z" fill="#8599be"/>
                <path d="M305 326h111v-3h13v-3h16v19h3v15h3v87H305z" fill="#cf9776"/>
                <path d="M445 320h152v121H462v-24h-11v-63h-3v-15h-3z" fill="#2f3a8f"/>
                <g class="axes">
                    <path d="M234 425V407" stroke="#e5e532"/><path d="M232 409l2-5 2 5z" fill="#e5e532"/>
                    <path d="M234 426h20" stroke="#d02020"/><path d="M252 424l5 2-5 2z" fill="#d02020"/>
                    <circle cx="234" cy="426" r="2" fill="#1c9a34"/>
                    <text x="234" y="407">Y</text><text x="254" y="427">X</text><text x="234" y="427">Z</text>
                </g>
                <rect x="658" y="350" width="8" height="116" fill="url(#legend)"/>
                <path d="M664 350.500h6M664 369.500h6M664 388.500h6M664 407.500h6M664 427.500h6M664 446.500h6M664 465.500h6" stroke="#d8d9de"/>
                <g class="legend">
                    <text x="672" y="352">3.0e+00</text>
                    <text x="672" y="371">2.5</text>
                    <text x="672" y="391">2</text>
                    <text x="672" y="410">1.5</text>
                    <text x="672" y="429">1</text>
                    <text x="672" y="449">0.5</text>
                    <text x="672" y="468">0.0e+00</text>
                    <text transform="translate(709 429) rotate(-90)">processorID</text>
                </g>
            </svg>
        </div>
    </section>

    <aside class="dock right">
        <h2 class="dock-title">Color Map Editor <svg><use href="#float"/></svg><svg><use href="#close"/></svg></h2>
        <div class="editor">
            <div class="search-row">
                <input type="text" placeholder="Search ... (use Esc to clear text)" aria-label="Search color map">
                <button class="btn" aria-label="Advanced"><svg><use href="#gear"/></svg></button>
                <button class="btn pressed" aria-label="Legend"><svg><use href="#ramp"/></svg></button>
                <button class="btn" aria-label="Edit legend"><svg><use href="#ramp-corner"/></svg></button>
            </div>
            <p class="array-name">Array Name: processorID</p>
            <div class="scroll-area">
                <div class="fields">
                    <div class="field two-line"><label for="rescale">Automatic Rescale<br>Range Mode</label><select id="rescale"><option>Grow and update on 'Apply'</option></select></div>
                    <label class="check"><input type="checkbox">Interpret Values As Categories</label>
                    <label class="check"><input type="checkbox">Rescale On Visibility Change</label>
                    <h3>Mapping Data</h3>
                    <div class="mapping">
                        <svg class="transfer" viewBox="0 0 152 118" preserveAspectRatio="none">
                            <path d="M5 96L149 4v92z" fill="url(#opacity)"/>
                            <path d="M4.500 4v92" stroke="#a3a8b0" stroke-width="2"/><path d="M148.500 4v92" stroke="#7a4a58"/>
                            <path d="M4 96L149 4" stroke="#555" fill="none"/>
                            <rect x="4" y="103" width="145" height="11" fill="url(#coolwarm)"/>
                            <g fill="#ccc" stroke="#666" stroke-width=".8">
                                <circle cx="4" cy="96" r="2.500" fill="#8c9be0"/><circle cx="149" cy="3.500" r="2.500" fill="#dd7b88"/>
                                <circle cx="4" cy="109" r="2.500" fill="#8c9be0"/><circle cx="76" cy="109" r="2.800"/><circle cx="149" cy="109" r="2.500" fill="#dd7b88"/>
                            </g>
                        </svg>
                        <div class="mapping-tools">
                            <button class="btn" aria-label="Rescale to data"><svg><use href="#range"/></svg></button>
                            <button class="btn" aria-label="Rescale to custom"><svg><use href="#range-c"/></svg></button>
                            <button class="btn" aria-label="Rescale over time"><svg><use href="#range-t"/></svg></button>
                            <button class="btn" aria-label="Rescale to visible"><svg><use href="#range-v"/></svg></button>
                            <button class="btn" aria-label="Invert"><svg><use href="#curve"/></svg></button>
                            <button class="btn" aria-label="Choose preset"><svg><use href="#fav"/></svg></button>
                            <button class="btn" aria-label="Save preset"><svg><use href="#load"/></svg></button>
                            <button class="btn" aria-label="Compute histogram"><svg><use href="#histo"/></svg></button>
                            <button class="btn" aria-label="Advanced"><svg><use href="#gear"/></svg></button>
                        </div>
                    </div>
                    <div class="field data"><label for="data">Data:</label><input id="data" type="text" value="0" disabled></div>
                    <label class="check"><input type="checkbox">Use log scale when mapping data to colors</label>
                    <label class="check"><input type="checkbox">Enable opacity mapping for surfaces</label>
                    <label class="check off"><input type="checkbox" disabled>Use log scale when mapping data to opacity</label>
                    <h3>Data Histogram</h3>
                    <label class="check"><input type="checkbox">Display data histogram</label>
                    <label class="check off"><input type="checkbox" disabled>Automatically recompute data histogram</label>
                    <div class="field bins"><label for="bins">Number of bins:</label><input id="bins" class="slider" type="range" value="5"><input type="text" value="10" aria-label="Bins" disabled></div>
                    <h3>Color Mapping Parameters</h3>
                    <div class="field"><label for="space">Color Space</label><select id="space"><option>Diverging</option></select></div>
                    <button class="btn nan"><i class="swatch"></i>Nan Color</button>
                    <div class="field opacity"><label for="nan">Nan Opacity</label><input id="nan" class="slider full" type="range" value="100"><input type="text" value="1" aria-label="Nan opacity value"></div>
                    <h3>Color Discretization</h3>
                    <i class="cut"></i>
                </div>
                <div class="scrollbar"><i class="up"></i><i class="thumb"></i><i class="down"></i></div>
            </div>
        </div>
        <div class="tabs bottom">
            <button class="tab">Output Messages</button>
            <button class="tab active">Color Map Editor</button>
        </div>
    </aside>
</main>

<footer class="status"><button aria-label="Stop"><svg class="small"><use href="#close"/></svg></button></footer>
</body>
</html>
```

FILE: styles.css
```css
:root {
    --bg: #efefef;
    --line: #c4c4c4;
    --text: #111;
    --muted: #b9b9b9;
    --blue: #308cc6;
}
* {
    box-sizing: border-box;
}
body {
    margin: 0;
    min-height: 100vh;
    display: flex;
    flex-direction: column;
    background: var(--bg);
    color: var(--text);
    font: 5px/8px "Noto Sans", "Noto Sans CJK JP", sans-serif;
    border-top: 1px solid #999;
    border-left: 1px solid #999;
}
button, input, select {
    font: inherit;
    color: inherit;
    margin: 0;
    padding: 0;
    border: 0;
    background: none;
    border-radius: 0;
    min-width: 0;
}
svg {
    display: block;
    flex: none;
}
.sprite {
    position: absolute;
    width: 0;
    height: 0;
}
h1, h2, h3, p, ul {
    margin: 0;
    padding: 0;
    font-size: inherit;
    font-weight: normal;
}

/* title and menus */
.titlebar {
    display: flex;
    align-items: center;
    height: 17px;
    padding: 0 8px 0 4px;
    background: #fff;
}
.titlebar h1 {
    font: 7px/9px "Open Sans", sans-serif;
    margin-left: 3px;
}
.logo {
    width: 9px;
    height: 7px;
}
.window-controls {
    display: flex;
    gap: 20px;
    margin-left: auto;
}
.window-controls svg {
    width: 8px;
    height: 8px;
}
.menubar {
    display: flex;
    gap: 7px;
    height: 10px;
    padding: 0 4px;
}
.menubar, h3, .section, .view-name {
    font-family: "Noto Sans CJK JP", sans-serif;
    font-size: 6px;
}

/* toolbars */
.toolbar {
    display: flex;
    align-items: center;
    height: 21px;
    border-bottom: 1px solid var(--line);
    background: linear-gradient(#f6f6f6, #ebebeb);
}
.handle {
    flex: none;
    width: 3px;
    height: 12px;
    margin: 0 2px 0 1px;
    border-left: 2px dotted #ccc;
}
.handle.wide {
    margin: 0 2px 0 4px;
}
.sep {
    flex: none;
    width: 1px;
    height: 14px;
    margin: 0 1px;
    background: #d4d4d4;
}
.tool {
    flex: none;
    display: grid;
    place-items: center;
    width: 18px;
    height: 18px;
}
.tool svg {
    width: 14px;
    height: 14px;
    overflow: visible;
}
.tool text {
    font: bold 7px "Liberation Sans", sans-serif;
    fill: #555;
}
.pressed {
    background: #d3d3d3;
    border: 1px solid #b8b8b8;
    border-radius: 1px;
}
.red { color: #d4211d; }
.gray { color: #bdbdbd; }
.mark-green { --mark: #5da84a; }
.mark-red { --mark: #cc3a30; }
.mark-gray { --mark: #bbb; }
.mark-pale { --mark: #cfe3c2; }
.mark-gold { --mark: #c99a36; }
.view-x { --up: #8cc06e; --side: #edb52d; --corner: #d6432f; }
.view-y { --up: #8cc06e; --side: #d6432f; --corner: #edb52d; }
.view-z { --up: #edb52d; --side: #d6432f; --corner: #8cc06e; }

/* form controls */
select, input[type="text"], input[type="number"] {
    border: 1px solid var(--line);
    border-radius: 1px;
    height: 11px;
    padding: 0 2px;
    background: #fff;
}
select {
    appearance: none;
    padding-right: 8px;
    background:
        conic-gradient(from -45deg at 50% 100%, #555 90deg, transparent 90deg) right 5px center / 5px 3px no-repeat,
        linear-gradient(#fdfdfd, #efefef);
}
select:disabled {
    opacity: .6;
}
input:disabled {
    background: #ebebeb !important;
    color: var(--muted);
}
input::placeholder {
    color: #888;
}
input[type="checkbox"] {
    appearance: none;
    flex: none;
    width: 8px;
    height: 8px;
    border: 1px solid var(--line);
    background: #fff;
}
input[type="checkbox"]:checked::after {
    content: "";
    display: block;
    width: 3px;
    height: 6px;
    margin: -1px 0 0 2px;
    border: solid #222;
    border-width: 0 1px 1px 0;
    transform: rotate(40deg);
}
.time {
    width: 24px;
    height: 12px;
    margin: 0 1px 0 2px;
}
.toolbar .step {
    appearance: textfield;
    width: 21px;
    height: 12px;
    background:
        conic-gradient(from 135deg at 50% 0, #666 90deg, transparent 90deg) right 2px top 2px / 4px 2px no-repeat,
        conic-gradient(from -45deg at 50% 100%, #666 90deg, transparent 90deg) right 2px bottom 2px / 4px 2px no-repeat,
        linear-gradient(var(--line), var(--line)) right 7px top / 1px 100% no-repeat,
        #fff;
}
.step::-webkit-inner-spin-button {
    appearance: none;
}
.note {
    margin-left: 2px;
}
.array-pick {
    position: relative;
    margin: 0 2px 0 0;
}
.array-pick::before {
    content: "";
    position: absolute;
    left: 6px;
    top: 5px;
    width: 3px;
    height: 3px;
    border-radius: 50%;
    background: #e8a92c;
}
.array {
    width: 83px;
    height: 13px;
    padding-left: 12px;
}
.component {
    width: 35px;
    height: 11px;
}
.repr {
    width: 71px;
}
.btn {
    display: flex;
    align-items: center;
    justify-content: center;
    gap: 3px;
    height: 13px;
    border: 1px solid var(--line);
    border-radius: 1px;
    background: linear-gradient(#fcfcfc, #ededed);
}
.btn:disabled {
    color: var(--muted);
}
.btn svg {
    width: 9px;
    height: 9px;
}
.btn.pressed {
    background: #d8d8d8;
}

/* docks */
.workspace {
    flex: 1;
    display: grid;
    grid-template-columns: 184px 1fr 183px;
    gap: 3px;
}
.dock {
    display: flex;
    flex-direction: column;
    min-width: 0;
}
.dock-title {
    display: flex;
    align-items: center;
    height: 9px;
    gap: 1px;
    padding: 0 1px;
}
.dock-title svg {
    width: 6px;
    height: 6px;
}
.dock-title svg:first-of-type {
    margin-left: auto;
}
.left .dock-title {
    padding-right: 2px;
}
.pipeline {
    flex: 1;
    list-style: none;
    background: #fff;
    border: 1px solid #ddd;
    margin: 0 1px 2px 0;
}
.pipeline li {
    display: flex;
    align-items: center;
    gap: 5px;
    height: 12px;
}
.pipeline svg {
    width: 8px;
    height: 8px;
}
.pipeline svg.eye {
    margin: 0 0 0 1px;
}
.pipeline li > svg:not(.eye) {
    margin: 0 -2px 0 0;
}
.selected {
    display: flex;
    align-items: center;
    gap: 2px;
    height: 11px;
    width: 40px;
    margin-left: -1px;
    background: var(--blue);
    color: #fff;
}
.tabs {
    display: flex;
    align-items: flex-end;
    height: 12px;
}
.tab {
    display: flex;
    align-items: center;
    justify-content: center;
    gap: 2px;
    height: 11px;
    min-width: 40px;
    padding: 0 6px;
    border: 1px solid var(--line);
    background: #dcdcdc;
}
.tab.active {
    height: 12px;
    background: #f6f6f6;
    border-bottom: 0;
}
.left .dock-title:nth-of-type(2) {
    margin: 1px 0 4px;
}
.properties {
    padding: 0 5px 4px 4px;
    display: flex;
    flex-direction: column;
    gap: 3px;
}
.actions {
    display: grid;
    grid-template-columns: repeat(4, 1fr);
    gap: 1px;
}
.actions .btn svg {
    width: 8px;
    height: 8px;
}
.actions .help {
    font-size: 10px;
    font-weight: bold;
    color: #6c9f54;
}
.search-row {
    display: flex;
    gap: 1px;
}
.search-row input[type="text"] {
    flex: 1;
    height: 13px;
}
.search-row .btn {
    width: 14px;
}
.scroll-area {
    display: flex;
}
.fields {
    flex: 1;
    min-width: 0;
    display: flex;
    flex-direction: column;
}
.section-row {
    display: flex;
    gap: 3px;
    margin-bottom: 3px;
}
.section-row .btn {
    width: 15px;
}
.section-row .section {
    flex: 1;
    font-weight: bold;
}
.dash {
    width: 6px;
    height: 2px;
    background: #3b8fbd;
}
.field {
    display: flex;
    min-height: 12px;
}
.field label {
    flex: none;
    width: 29px;
}
.left .field select, .path {
    flex: 1;
}
.field .path {
    height: 13px;
    padding: 0 1px;
}
.browse {
    width: 11px;
    height: 11px;
    margin: 1px 0 0 2px;
}
.refresh {
    width: 38px;
    height: 11px;
    margin: 2px 0 1px;
}
.check {
    display: flex;
    align-items: center;
    gap: 3px;
    height: 11px;
}
.off {
    color: var(--muted);
}
.off input {
    border-color: #d4d4d4;
}
.mesh {
    display: flex;
    align-items: center;
    gap: 4px;
    height: 13px;
    padding: 0 2px;
    border: 1px solid var(--line);
    background: linear-gradient(#fff, #eee);
    font: 7px/9px "Open Sans", sans-serif;
}
.mesh svg {
    width: 8px;
    height: 8px;
    margin-left: auto;
}
.partial {
    width: 6px;
    height: 6px;
    border: 1px solid #aaa;
    background: #777;
}
.scrollbar {
    flex: none;
    width: 8px;
    display: flex;
    flex-direction: column;
    align-items: center;
    background: #e2e2e2;
}
.up, .down {
    width: 8px;
    height: 8px;
    background: #f4f4f4;
}
.up::before, .down::before {
    content: "";
    display: block;
    margin: 3px auto 0;
    width: 0;
    border: 2px solid transparent;
}
.up::before {
    border-top: 0;
    border-bottom-color: #444;
}
.down::before {
    border-bottom: 0;
    border-top-color: #444;
}
.thumb {
    width: 8px;
    height: 275px;
    margin-bottom: auto;
    border: 1px solid #d6d6d6;
    background: #f8f8f8;
}
.thumb.short {
    height: 14px;
}

/* view layout */
.layout {
    display: flex;
    flex-direction: column;
    min-width: 0;
}
.view-tabs {
    height: 14px;
    border-bottom: 1px solid var(--line);
}
.view-tabs .tab {
    height: 12px;
    min-width: 17px;
}
.view-tabs .tab.active {
    height: 13px;
    background: #fff;
}
.tab svg {
    width: 8px;
    height: 8px;
}
.view-tools {
    display: flex;
    align-items: center;
    height: 13px;
    overflow: hidden;
}
.view-tools button {
    flex: none;
    display: grid;
    place-items: center;
    width: 12px;
    height: 12px;
}
.view-tools svg {
    width: 9px;
    height: 9px;
}
.view-tools .sep {
    margin: 0 1px 0 2px;
    height: 10px;
}
.view-tools .mode {
    font-weight: bold;
    color: #666;
}
.view-name {
    margin: 0 4px 0 auto;
    text-decoration: underline;
}
.view-tools .frame {
    border: 1px solid #d6d6d6;
    background: #f6f6f6;
    margin-left: 1px;
}
.tab .small, .frame .small, .status .small {
    width: 6px;
    height: 6px;
}
.render {
    flex: 1;
    border: 2px solid #3636f0;
    background: #52576e;
    display: flex;
}
.render svg {
    width: 100%;
    height: auto;
}
.legend {
    font: 8px "Liberation Sans", sans-serif;
    fill: #dfe0e5;
}
.axes {
    font: bold 6px "Liberation Sans", sans-serif;
    fill: #fff;
}

/* color map editor */
.right .dock-title {
    padding-left: 3px;
}
.editor {
    flex: 1;
    padding: 5px 3px 0 6px;
}
.array-name {
    margin: 2px 0;
}
.right .field {
    min-height: 13px;
}
.right .field label {
    width: 48px;
}
.right .field > select, .right .field > input[type="text"] {
    flex: 1;
}
.right .two-line {
    line-height: 6px;
}
.right .data label {
    width: 15px;
}
.right .data {
    margin: 3px 0 1px;
}
.right .data input {
    height: 12px;
}
h3 {
    font-weight: bold;
    height: 9px;
    margin-bottom: 2px;
    border-bottom: 1px solid #bbb;
}
.mapping {
    display: flex;
    gap: 1px;
}
.transfer {
    flex: 1;
    min-width: 0;
    height: 118px;
    background: #fff;
}
.mapping-tools .btn {
    width: 13px;
}
.slider {
    appearance: none;
    width: 60px;
    height: 11px;
    background: linear-gradient(#c4c4c4, #c4c4c4) center / 100% 3px no-repeat;
}
.slider::-webkit-slider-thumb {
    appearance: none;
    width: 8px;
    height: 8px;
    border: 1px solid #bbb;
    border-radius: 1px;
    background: #fcfcfc;
}
.slider.full {
    width: 57px;
    background-image: linear-gradient(#3a9bdc, #3a9bdc);
}
.right .slider + input[type="text"] {
    flex: none;
    width: 57px;
    height: 12px;
    margin-left: auto;
}
.right .bins label {
    width: 41px;
}
.right .bins {
    align-items: center;
    min-height: 15px;
}
.right .opacity {
    margin: 1px 0 2px;
}
.nan {
    justify-content: flex-start;
    gap: 1px;
    padding-left: 2px;
}
.swatch {
    width: 9px;
    height: 9px;
    border: 1px solid #555;
    border-radius: 50%;
    background: #ff0;
}
.cut {
    width: 8px;
    height: 1px;
    background: #ccc;
}
.bottom .tab {
    height: 11px;
}
.status {
    display: flex;
    justify-content: center;
    align-items: center;
    height: 12px;
    border-top: 1px solid var(--line);
}
```
